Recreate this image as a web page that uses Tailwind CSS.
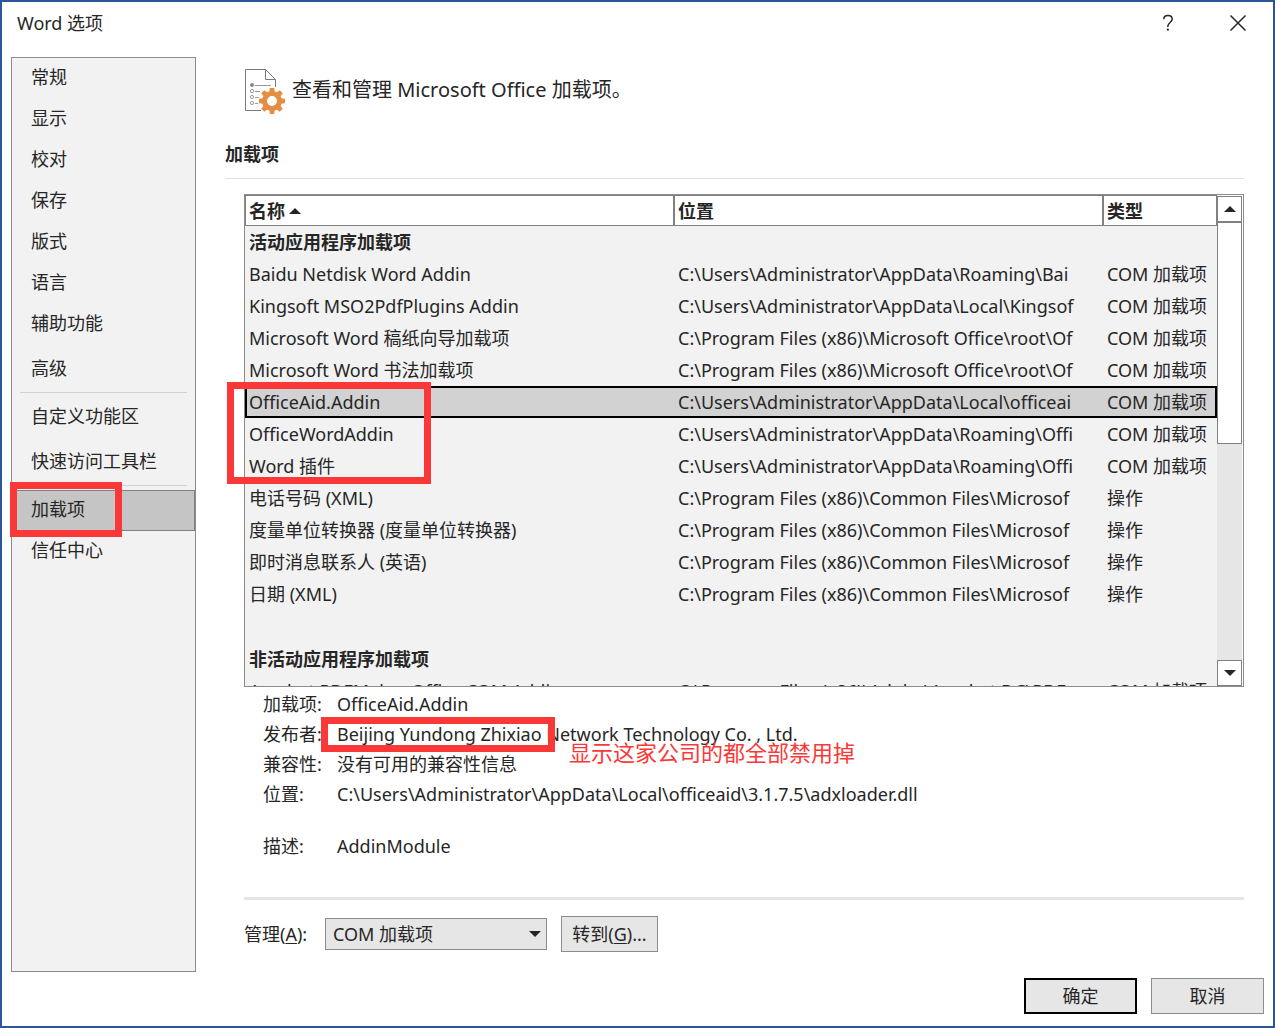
<!DOCTYPE html>
<html lang="zh-CN">
<head>
  <meta charset="UTF-8" />
  <meta name="viewport" content="width=device-width, initial-scale=1.0" />
  <title>Word 选项</title>
  <script src="https://cdn.jsdelivr.net/npm/@tailwindcss/browser@4"></script>
</head>
<body class="bg-white text-[#262626] text-[18px] font-['Noto_Sans','Noto_Sans_CJK_SC',sans-serif]">

<div class="min-h-screen flex flex-col border-2 border-[#2b579a]">

  <!-- Title bar -->
  <header class="flex items-start justify-between h-[55px] pl-[15px] pr-[26px]">
    <h1 class="leading-[42px]">Word 选项</h1>
    <div class="flex items-center h-[42px] gap-[54px]">
      <button type="button" aria-label="帮助">
        <svg class="w-[14px] h-[18px]" viewBox="0 0 14 18" fill="none" stroke="#262626" stroke-width="1.5">
          <path d="M2.8 5.2C2.8 2.8 4.5 1.5 7 1.5s4.2 1.4 4.2 3.6c0 3.2-4.4 3.6-4.4 7.2v.7" />
          <path d="M5.9 15.6h1.9" stroke-width="2" />
        </svg>
      </button>
      <button type="button" aria-label="关闭">
        <svg class="w-[18px] h-[18px]" viewBox="0 0 18 18" fill="none" stroke="#262626" stroke-width="1.5">
          <path d="M1.5 1.5l15 15M16.5 1.5l-15 15" />
        </svg>
      </button>
    </div>
  </header>

  <div class="flex-1 flex pl-[9px] pr-[29px]">

    <!-- Categories -->
    <nav class="w-[185px] shrink-0 flex flex-col bg-[#f2f2f2] border border-[#8c8c8c]">
      <button type="button" class="h-[41px] shrink-0 pl-[19px] pb-0.5 text-left">常规</button>
      <button type="button" class="h-[41px] shrink-0 pl-[19px] pb-0.5 text-left">显示</button>
      <button type="button" class="h-[41px] shrink-0 pl-[19px] pb-0.5 text-left">校对</button>
      <button type="button" class="h-[41px] shrink-0 pl-[19px] pb-0.5 text-left">保存</button>
      <button type="button" class="h-[41px] shrink-0 pl-[19px] pb-0.5 text-left">版式</button>
      <button type="button" class="h-[41px] shrink-0 pl-[19px] pb-0.5 text-left">语言</button>
      <button type="button" class="h-[41px] shrink-0 pl-[19px] pb-0.5 text-left">辅助功能</button>
      <button type="button" class="h-[41px] shrink-0 mt-1 pl-[19px] pb-0.5 text-left">高级</button>
      <hr class="mx-2 mt-0.5 mb-1 border-[#d0d0d0]" />
      <button type="button" class="h-[41px] shrink-0 pl-[19px] pb-0.5 text-left">自定义功能区</button>
      <button type="button" class="h-[41px] shrink-0 mt-1 pl-[19px] pb-0.5 text-left">快速访问工具栏</button>
      <hr class="mx-2 mt-0.5 mb-1 border-[#d0d0d0]" />
      <button type="button" class="relative h-[41px] shrink-0 pl-[18px] pb-0.5 text-left bg-[#c5c5c5] border border-[#808080]">
        加载项
        <span class="absolute -left-[3px] -top-[9px] w-[112px] h-[55px] border-[7px] border-[#fb3838]"></span>
      </button>
      <button type="button" class="h-[41px] shrink-0 pl-[19px] pb-0.5 text-left">信任中心</button>
    </nav>

    <main class="flex-1 min-w-0 pl-[29px] pt-3">
      <div class="flex items-start gap-[6px] pl-[19px] text-[20px]">
        <svg class="w-[42px] h-[46px] shrink-0" viewBox="0 0 42 46" fill="none">
          <path d="M17 41.5H1.5V.5h20l10 10V18M21.5.5v10h10" stroke="#7a7a7a" />
          <circle cx="8" cy="16" r="2" fill="#8a8a8a" />
          <g stroke="#999">
            <circle cx="8" cy="22" r="1.6" />
            <circle cx="8" cy="28" r="1.6" />
            <circle cx="8" cy="34" r="1.6" />
            <path d="M11 16.500h16M11 22.500h5M11 28.500h4M11 34.500h3" />
          </g>
          <g transform="translate(28 32)" fill="#e58d43">
            <path fill-rule="evenodd" d="M0-10a10 10 0 1 0 0 20a10 10 0 1 0 0-20zM0-5a5 5 0 1 1 0 10a5 5 0 1 1 0-10z" />
            <g id="teeth">
              <path id="tooth" d="M-2.700-9L-2.200-13h4.400L2.700-9z" />
              <use href="#tooth" transform="rotate(45)" />
              <use href="#tooth" transform="rotate(90)" />
              <use href="#tooth" transform="rotate(135)" />
            </g>
            <use href="#teeth" transform="rotate(180)" />
          </g>
        </svg>
        <p class="leading-[42px]">查看和管理 Microsoft Office 加载项。</p>
      </div>

      <h2 class="mt-[25px] pb-[10px] leading-7 font-bold border-b border-[#e1e1e1]">加载项</h2>

      <div class="pl-[19px]">
        <!-- Add-in list -->
        <div class="relative mt-[15px]">
          <div class="flex h-[493px] overflow-hidden border border-[#8c8c8c] bg-[#f2f2f2]">
            <div class="flex-1 min-w-0 overflow-hidden">
              <table class="w-full table-fixed border-separate border-spacing-0 text-left whitespace-nowrap">
                <colgroup>
                  <col />
                  <col />
                  <col class="w-[114px]" />
                </colgroup>
                <thead>
                  <tr class="h-[31px] bg-white leading-7">
                    <th class="border border-[#808080] p-0 pl-[3px]">
                      <span class="flex items-center gap-1">名称
                        <svg class="w-[12px] h-[6px]" viewBox="0 0 12 6" fill="#262626"><path d="M0 6L6 0l6 6z" /></svg>
                      </span>
                    </th>
                    <th class="border border-[#808080] p-0 pl-[3px]">位置</th>
                    <th class="border border-[#808080] p-0 pl-[3px]">类型</th>
                  </tr>
                </thead>
                <tbody id="addinRows" class="leading-7"></tbody>
              </table>
            </div>

            <div class="w-[26px] shrink-0 flex flex-col pt-px pr-px bg-white">
              <button type="button" aria-label="向上滚动" class="h-[26px] shrink-0 flex items-center justify-center bg-white border border-[#808080]">
                <svg class="w-[12px] h-[6px]" viewBox="0 0 12 6" fill="#262626"><path d="M0 6L6 0l6 6z" /></svg>
              </button>
              <div class="flex-1 bg-[#e6e6e6]">
                <div class="h-[222px] bg-white border border-[#808080]"></div>
              </div>
              <button type="button" aria-label="向下滚动" class="h-[26px] shrink-0 flex items-center justify-center bg-white border border-[#808080]">
                <svg class="w-[12px] h-[6px]" viewBox="0 0 12 6" fill="#262626"><path d="M0 0l6 6 6-6z" /></svg>
              </button>
            </div>
          </div>
          <span class="absolute -left-[17px] top-[188px] w-[204px] h-[102px] border-[7px] border-[#fb3838]"></span>
        </div>

        <!-- Details of the selected add-in -->
        <dl class="relative grid grid-cols-[74px_1fr] mt-0.5 pl-[19px] leading-[30px] whitespace-nowrap">
          <dt>加载项:</dt>
          <dd>OfficeAid.Addin</dd>
          <dt>发布者:</dt>
          <dd class="relative">
            Beijing Yundong Zhixiao Network Technology Co. , Ltd.
            <span class="absolute -left-[16px] -top-[2px] w-[234px] h-[35px] border-[7px] border-[#fb3838]"></span>
            <span class="absolute left-[232px] top-[18px] text-[22px] text-[#fb3838]">显示这家公司的都全部禁用掉</span>
          </dd>
          <dt>兼容性:</dt>
          <dd>没有可用的兼容性信息</dd>
          <dt>位置:</dt>
          <dd>C:\Users\Administrator\AppData\Local\officeaid\3.1.7.5\adxloader.dll</dd>
          <dt class="mt-[22px]">描述:</dt>
          <dd class="mt-[22px]">AddinModule</dd>
        </dl>

        <div class="flex items-center mt-9 pt-4 border-t-[3px] border-[#e5e5e5]">
          <label for="manage" class="w-[81px]">管理(<u class="underline-offset-2">A</u>):</label>
          <div class="relative w-[222px]">
            <select id="manage" class="appearance-none w-full h-8 pl-[7px] leading-7 bg-[#e6e6e6] border border-[#8c8c8c]">
              <option>COM 加载项</option>
              <option>操作</option>
            </select>
            <svg class="absolute right-[6px] top-[13px] w-[12px] h-[6px] pointer-events-none" viewBox="0 0 12 6" fill="#262626"><path d="M0 0l6 6 6-6z" /></svg>
          </div>
          <button type="button" class="ml-[14px] w-[97px] h-9 bg-[#e6e6e6] border border-[#8c8c8c]">转到(<u class="underline-offset-2">G</u>)...</button>
        </div>
      </div>
    </main>
  </div>

  <footer class="flex justify-end gap-[14px] pt-[6px] pb-3 pr-[9px]">
    <button type="button" class="w-[113px] h-9 bg-[#e6e6e6] border-2 border-black">确定</button>
    <button type="button" class="w-[113px] h-9 bg-[#e6e6e6] border border-[#8c8c8c]">取消</button>
  </footer>
</div>

<script>
  const active = [
    ["Baidu Netdisk Word Addin", "C:\\Users\\Administrator\\AppData\\Roaming\\Bai", "COM 加载项"],
    ["Kingsoft MSO2PdfPlugins Addin", "C:\\Users\\Administrator\\AppData\\Local\\Kingsof", "COM 加载项"],
    ["Microsoft Word 稿纸向导加载项", "C:\\Program Files (x86)\\Microsoft Office\\root\\Of", "COM 加载项"],
    ["Microsoft Word 书法加载项", "C:\\Program Files (x86)\\Microsoft Office\\root\\Of", "COM 加载项"],
    ["OfficeAid.Addin", "C:\\Users\\Administrator\\AppData\\Local\\officeai", "COM 加载项"],
    ["OfficeWordAddin", "C:\\Users\\Administrator\\AppData\\Roaming\\Offi", "COM 加载项"],
    ["Word 插件", "C:\\Users\\Administrator\\AppData\\Roaming\\Offi", "COM 加载项"],
    ["电话号码 (XML)", "C:\\Program Files (x86)\\Common Files\\Microsof", "操作"],
    ["度量单位转换器 (度量单位转换器)", "C:\\Program Files (x86)\\Common Files\\Microsof", "操作"],
    ["即时消息联系人 (英语)", "C:\\Program Files (x86)\\Common Files\\Microsof", "操作"],
    ["日期 (XML)", "C:\\Program Files (x86)\\Common Files\\Microsof", "操作"]
  ];
  const inactive = [
    ["Acrobat PDFMaker Office COM Addin", "C:\\Program Files (x86)\\Adobe\\Acrobat DC\\PDF", "COM 加载项"]
  ];
  const selected = "OfficeAid.Addin";

  function group(title) {
    return `<tr class="h-8"><th colspan="3" class="p-0 pl-1">${title}</th></tr>`;
  }

  function row(item) {
    const cls = item[0] === selected
      ? "h-8 bg-[#d2d2d2] outline-2 -outline-offset-2 outline-black"
      : "h-8";
    return `<tr class="${cls}">${item.map(t => `<td class="p-0 pl-1">${t}</td>`).join("")}</tr>`;
  }

  document.getElementById("addinRows").innerHTML =
    group("活动应用程序加载项") +
    active.map(row).join("") +
    `<tr class="h-[33px]"><td colspan="3"></td></tr>` +
    group("非活动应用程序加载项") +
    inactive.map(row).join("");
</script>
</body>
</html>
